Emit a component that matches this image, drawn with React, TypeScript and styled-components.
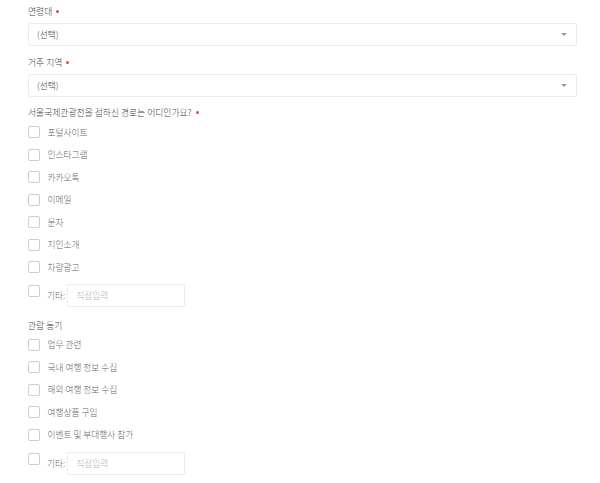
import React from "react";
import styled, { createGlobalStyle } from "styled-components";

const GlobalStyle = createGlobalStyle`
    html, body {
        margin: 0;
        padding: 0;
        background: #fff;
    }
    body {
        font-family: "Noto Sans CJK KR", "Noto Sans", sans-serif;
        font-weight: 300;
    }
`;

const sources = [
    "포털사이트",
    "인스타그램",
    "카카오톡",
    "이메일",
    "문자",
    "지인소개",
    "차량광고",
];

const motives = [
    "업무 관련",
    "국내 여행 정보 수집",
    "해외 여행 정보 수집",
    "여행상품 구입",
    "이벤트 및 부대행사 참가",
];

const SelectField = ({ label }: { label: string }) => (
    <Field>
        <FieldLabel>
            {label}
            <Required />
        </FieldLabel>
        <SelectBox>
            <span>(선택)</span>
            <svg width="6" height="3" viewBox="0 0 6 3">
                <polygon points="0,0 6,0 3,3" fill="#9a9a9a" />
            </svg>
        </SelectBox>
    </Field>
);

const CheckGroup = ({
    label,
    items,
    required,
}: {
    label: string;
    items: string[];
    required?: boolean;
}) => (
    <Group>
        <GroupLabel>
            {label}
            {required && <Required />}
        </GroupLabel>
        {items.map((item) => (
            <OptionRow key={item}>
                <CheckBox type="checkbox" />
                <span>{item}</span>
            </OptionRow>
        ))}
        <OtherRow>
            <CheckBox type="checkbox" className="other" />
            <OtherText>기타:</OtherText>
            <OtherInput placeholder="직접입력" />
        </OtherRow>
    </Group>
);

const App = () => {
    return (
        <>
            <GlobalStyle />
            <Form>
                <SelectField label="연령대" />
                <SelectField label="거주 지역" />
                <CheckGroup
                    label="서울국제관광전을 접하신 경로는 어디인가요?"
                    items={sources}
                    required
                />
                <CheckGroup label="관람 동기" items={motives} />
            </Form>
        </>
    );
};

const Form = styled.div`
    width: 549px;
    padding: 6px 0 0 28px;
`;

const Field = styled.div`
    margin-bottom: 10.5px;
`;

const FieldLabel = styled.div`
    display: flex;
    align-items: center;
    font-size: 8.8px;
    line-height: 12px;
    color: #444;
    margin-bottom: 5px;
`;

const Required = styled.span`
    width: 3px;
    height: 3px;
    border-radius: 50%;
    background: #e8463f;
    margin-left: 4px;
    margin-top: -1px;
`;

const SelectBox = styled.div`
    height: 23px;
    box-sizing: border-box;
    border: 1px solid #ececec;
    border-radius: 2px;
    background: #fff;
    display: flex;
    align-items: center;
    justify-content: space-between;
    padding: 0 9px 0 8px;
    font-size: 8.7px;
    color: #444;
    cursor: pointer;
`;

const Group = styled.div`
    & + & {
        margin-top: 12.5px;
    }
`;

const GroupLabel = styled(FieldLabel)`
    margin-bottom: 1.75px;
`;

const OptionRow = styled.label`
    height: 22.5px;
    display: flex;
    align-items: center;
    gap: 7.5px;
    font-size: 8.7px;
    color: #666;
`;

const CheckBox = styled.input`
    appearance: none;
    width: 12px;
    height: 12px;
    margin: 0;
    box-sizing: border-box;
    border: 1px solid #cdcdcd;
    border-radius: 2px;
    background: #fff;
    flex-shrink: 0;

    &.other {
        margin-top: 1px;
    }
`;

const OtherRow = styled.div`
    display: flex;
    align-items: flex-start;
    gap: 7px;
    margin-top: 5.75px;
`;

const OtherText = styled.span`
    font-size: 8.7px;
    line-height: 23px;
    color: #666;
`;

const OtherInput = styled.input`
    width: 118px;
    height: 23px;
    box-sizing: border-box;
    margin: 0 0 0 -5px;
    border: 1px solid #ececec;
    border-radius: 2px;
    padding: 0 8px;
    font-family: inherit;
    font-weight: 300;
    font-size: 8.7px;
    color: #444;
    outline: none;

    &::placeholder {
        color: #b5b5b5;
    }
`;

export default App;
